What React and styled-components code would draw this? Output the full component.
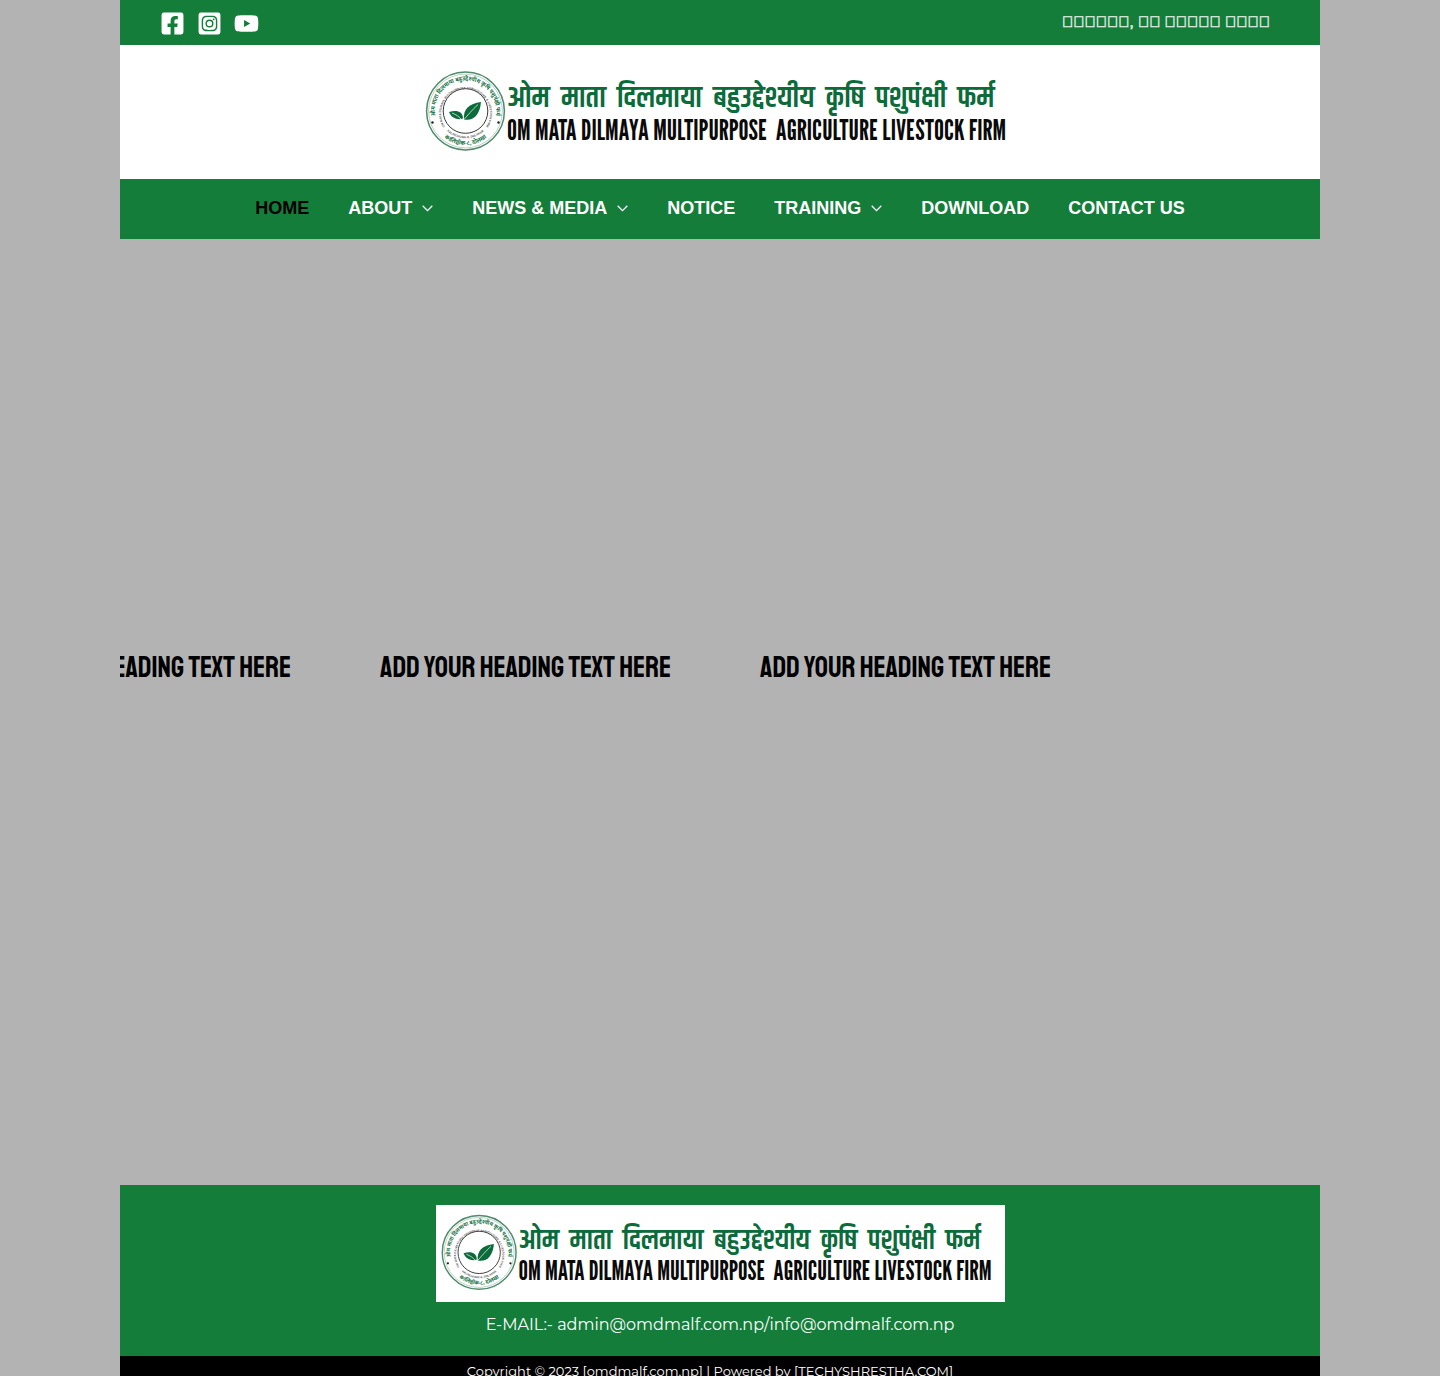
import React from "react";
import styled, { createGlobalStyle } from "styled-components";
import { FaFacebookSquare, FaInstagramSquare, FaYoutube } from "react-icons/fa";

const green = "#147d39";
const sans = '"Liberation Sans", Arial, sans-serif';
const body = 'Montserrat, "Open Sans", sans-serif';
const display = 'Staatliches, "Bebas Neue", sans-serif';
const wordmark = '"League Gothic", "Bebas Neue", sans-serif';
const nepali = 'Mukta, "Noto Sans Devanagari", sans-serif';
const nepaliDisplay = 'Khand, Teko, Mukta, sans-serif';

const GlobalStyle = createGlobalStyle`
  *, *::before, *::after { box-sizing: border-box; }
  body { margin: 0; background: #b3b3b3; font-family: ${body}; }
  a { color: inherit; text-decoration: none; }
`;

const Page = styled.div`
  max-width: 1200px;
  margin: 0 auto;
`;

const TopBar = styled.div`
  display: flex;
  align-items: center;
  justify-content: space-between;
  height: 45px;
  padding: 1px 50px 0 40px;
  background: ${green};
  color: #fff;
`;

const Social = styled.div`
  display: flex;
  gap: 12px;
`;

const SocialLink = styled.a`
  display: flex;
  svg { width: 25px; height: 25px; }
`;

const DateText = styled.span`
  padding-bottom: 2px;
  font: 400 15px/24px ${sans};
  -webkit-text-stroke: 1px rgba(255, 255, 255, 0.5);
`;

const Branding = styled.div`
  display: flex;
  justify-content: center;
  padding: 16px 20px;
  background: #fff;
`;

const LogoLink = styled.a`
  display: block;
  width: 100%;
  max-width: ${(p) => p.$width}px;
  background: #fff;
  svg { display: block; width: 100%; height: auto; }
`;

const Nav = styled.nav`
  display: flex;
  flex-wrap: wrap;
  align-items: center;
  justify-content: center;
  gap: 0 39px;
  min-height: 60px;
  background: ${green};
`;

const NavLink = styled.a`
  display: flex;
  align-items: center;
  gap: 10px;
  padding-bottom: 2px;
  font: 700 18px/28px ${sans};
  color: ${(p) => (p.$active ? "#000" : "#fff")};
`;

const Main = styled.main`
  display: flex;
  align-items: center;
  min-height: 946px;
  padding-bottom: 88px;
  overflow: hidden;
`;

const Track = styled.div`
  display: flex;
  margin-left: -10%;
`;

const Slide = styled.div`
  flex: 0 0 380px;
`;

const Heading = styled.h2`
  margin: 0;
  font: 400 29px/32px ${display};
  text-transform: uppercase;
  white-space: nowrap;
  color: #000;
`;

const Footer = styled.footer`
  display: flex;
  flex-direction: column;
  align-items: center;
  gap: 10px;
  padding: 20px 20px 18px;
  background: ${green};
  color: #fff;
`;

const Email = styled.p`
  margin: 0;
  font: 400 16px/26px ${body};
`;

const Copyright = styled.div`
  padding: 5px 20px 0 0;
  background: #000;
  color: #fff;
  text-align: center;
  font: 400 13px/20px ${body};
`;

function Chevron() {
  return (
    <svg width="11" height="7" viewBox="0 0 11 7" fill="none" stroke="currentColor" strokeWidth="1.3" aria-hidden="true">
      <path d="M.7.8 5.5 5.6 10.3.8" />
    </svg>
  );
}

function Logo({ id }) {
  const outer = `${id}-outer`;
  const inner = `${id}-inner`;
  const lower = `${id}-lower`;
  const base = `${id}-base`;
  return (
    <svg viewBox="0 0 600 102" role="img" aria-label="Om Mata Dilmaya Multipurpose Agriculture Livestock Firm">
      <defs>
        <path id={outer} d="M17.500 62A30.500 30.500 0 1 1 73.500 62" />
        <path id={inner} d="M26 67A24.400 24.400 0 1 1 65 67" />
        <path id={lower} d="M15 65A34 34 0 0 0 76 65" />
        <path id={base} d="M27 70A27.300 27.300 0 0 0 64 70" />
      </defs>
      <circle cx="45.500" cy="50" r="38.900" fill="#fff" stroke="#4f8a6b" strokeWidth="1.500" />
      <circle cx="45.500" cy="50" r="36.900" fill="none" stroke="#9dbfac" strokeWidth=".7" />
      <circle cx="45.500" cy="50" r="22.300" fill="none" stroke="#222" strokeWidth=".9" />
      <g fill="#0b6b3a" fontFamily={nepali} fontWeight="700">
        <text fontSize="6"><textPath href={`#${outer}`} startOffset="50%" textAnchor="middle">ओम माता दिलमाया बहुउद्देश्यीय कृषि पशुपंक्षी फर्म</textPath></text>
        <text fontSize="6"><textPath href={`#${lower}`} startOffset="50%" textAnchor="middle">कालिञ्चोक-८, दोलखा</textPath></text>
      </g>
      <g fill="#555" fontFamily={sans} fontWeight="700">
        <text fontSize="3"><textPath href={`#${inner}`} startOffset="50%" textAnchor="middle">OM MATA DILMAYA MULTIPURPOSE AGRICULTURE &amp; LIVESTOCK FIRM</textPath></text>
        <text fontSize="3"><textPath href={`#${base}`} startOffset="50%" textAnchor="middle">KALINCHOWK-8, DOLAKHA</textPath></text>
      </g>
      <circle cx="12.500" cy="61.500" r="1.200" fill="#222" />
      <circle cx="78.500" cy="61.500" r="1.200" fill="#222" />
      <path d="M43 57.500C39 59 32 58.500 29 51C36 48.500 43 50 43 57.500Z" fill="#0b6b3a" />
      <path d="M44 58.500C43 48 49 42.500 61 41C60 53 54 60.500 44 58.500Z" fill="#0b6b3a" />
      <path d="M42 59C39 55.500 36 53.500 32 52M44 58.500C48 54 52 49 58 43.500" fill="none" stroke="#fff" strokeWidth=".7" />
      <text x="87" y="46" fill="#0b6b3a" fontFamily={nepaliDisplay} fontWeight="600" fontSize="30" style={{ whiteSpace: "pre" }}>
        {"ओम  माता  दिलमाया  बहुउद्देश्यीय  कृषि  पशुपंक्षी  फर्म"}
      </text>
      <text x="87" y="79" fill="#0a0a0a" fontFamily={wordmark} fontWeight="400" fontSize="28" style={{ whiteSpace: "pre" }}>
        {"OM MATA DILMAYA MULTIPURPOSE  AGRICULTURE LIVESTOCK FIRM"}
      </text>
    </svg>
  );
}

const links = [
  { label: "HOME", active: true },
  { label: "ABOUT", menu: true },
  { label: "NEWS & MEDIA", menu: true },
  { label: "NOTICE" },
  { label: "TRAINING", menu: true },
  { label: "DOWNLOAD" },
  { label: "CONTACT US" },
];

const slides = ["one", "two", "three"];

const box = (count) => "\uE000".repeat(count);
const today = `${box(6)}, ${box(2)} ${box(5)} ${box(4)}`;

export default function App() {
  return (
    <>
      <GlobalStyle />
      <Page>
        <header>
          <TopBar>
            <Social>
              <SocialLink href="#facebook" aria-label="Facebook"><FaFacebookSquare /></SocialLink>
              <SocialLink href="#instagram" aria-label="Instagram"><FaInstagramSquare /></SocialLink>
              <SocialLink href="#youtube" aria-label="YouTube"><FaYoutube /></SocialLink>
            </Social>
            <DateText>{today}</DateText>
          </TopBar>
          <Branding>
            <LogoLink href="#home" $width={600}><Logo id="header" /></LogoLink>
          </Branding>
          <Nav aria-label="Main">
            {links.map((link) => (
              <NavLink key={link.label} href="#" $active={link.active}>
                {link.label}
                {link.menu && <Chevron />}
              </NavLink>
            ))}
          </Nav>
        </header>
        <Main>
          <Track>
            {slides.map((slide) => (
              <Slide key={slide}>
                <Heading>Add Your Heading Text Here</Heading>
              </Slide>
            ))}
          </Track>
        </Main>
        <Footer>
          <LogoLink href="#home" $width={569}><Logo id="footer" /></LogoLink>
          <Email>E-MAIL:- admin@omdmalf.com.np/info@omdmalf.com.np</Email>
        </Footer>
        <Copyright>Copyright © 2023 [omdmalf.com.np] | Powered by [TECHYSHRESTHA.COM]</Copyright>
      </Page>
    </>
  );
}
